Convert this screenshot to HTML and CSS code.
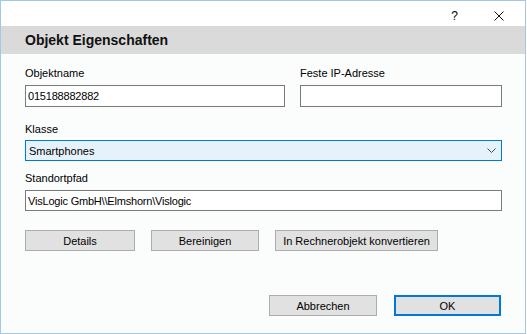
FILE: index.html
```html
<!DOCTYPE html>
<html lang="de">
<head>
    <meta charset="UTF-8">
    <meta name="viewport" content="width=device-width, initial-scale=1.0">
    <title>Objekt Eigenschaften</title>
    <link rel="stylesheet" href="styles.css">
</head>
<body>
    <div class="window">
        <div class="titlebar">
            <span class="help">?</span>
            <span class="close">
                <svg width="10" height="10" viewBox="0 0 10 10">
                    <path d="M0.5 0.5 L9.5 9.5 M9.5 0.5 L0.5 9.5" stroke="#111" stroke-width="1" fill="none"/>
                </svg>
            </span>
        </div>
        <div class="header">Objekt Eigenschaften</div>

        <div class="content">
            <div class="row-two">
                <div class="field">
                    <label for="name">Objektname</label>
                    <input type="text" id="name" class="input" value="015188882882">
                </div>
                <div class="field">
                    <label for="ip">Feste IP-Adresse</label>
                    <input type="text" id="ip" class="input" value="">
                </div>
            </div>

            <div class="field klasse">
                <label>Klasse</label>
                <div class="combo">
                    <span>Smartphones</span>
                    <svg width="9" height="5" viewBox="0 0 9 5">
                        <path d="M0.5 0.5 L4.5 4.5 L8.5 0.5" stroke="#444" stroke-width="1" fill="none"/>
                    </svg>
                </div>
            </div>

            <div class="field standort">
                <label for="path">Standortpfad</label>
                <input type="text" id="path" class="input small" value="VisLogic GmbH\\Elmshorn\Vislogic">
            </div>

            <div class="actions">
                <button class="btn details">Details</button>
                <button class="btn bereinigen">Bereinigen</button>
                <button class="btn convert">In Rechnerobjekt konvertieren</button>
            </div>

            <div class="footer">
                <button class="btn cancel">Abbrechen</button>
                <button class="btn ok">OK</button>
            </div>
        </div>
    </div>
</body>
</html>
```

FILE: styles.css
```css
/* Dialog im Windows-Stil */
html {
    background: #ffffff;
}
body {
    margin: 0;
    font-family: "Liberation Sans", Arial, sans-serif;
    font-size: 11px;
    color: #000000;
}
.window {
    box-sizing: border-box;
    width: 526px;
    height: 334px;
    border: 1px solid #a3c7e8;
    background: #fbfcfc;
}
.titlebar {
    height: 25px;
    background: #ffffff;
    display: flex;
    align-items: center;
    justify-content: flex-end;
    padding-right: 21px;
}
.help {
    font-size: 12px;
    line-height: 12px;
    margin-right: 36px;
    margin-top: 4px;
}
.close {
    display: flex;
    margin-top: 4px;
}
.header {
    height: 28px;
    background: #dadada;
    padding-left: 24px;
    font-size: 14px;
    font-weight: bold;
    line-height: 29px;
    color: #111111;
}
.content {
    width: 477px;
    padding-left: 24px;
    padding-top: 13px;
}
.row-two {
    display: grid;
    grid-template-columns: 260px 202px;
    gap: 15px;
}
.field {
    display: flex;
    flex-direction: column;
}
.field label {
    line-height: 13px;
    height: 13px;
    margin-bottom: 5px;
}
.input {
    box-sizing: border-box;
    height: 22px;
    border: 1px solid #7a7a7a;
    background: #ffffff;
    padding: 0 2px;
    margin: 0;
    font-family: "Liberation Sans", Arial, sans-serif;
    font-size: 11px;
    letter-spacing: -0.2px;
    color: #000000;
    outline: none;
}
.input.small {
    height: 21px;
}
.klasse {
    margin-top: 16px;
}
.klasse label {
    margin-bottom: 4px;
}
.combo {
    box-sizing: border-box;
    height: 21px;
    border: 1px solid #0078d7;
    background: #e5f1fb;
    display: flex;
    align-items: center;
    justify-content: space-between;
    padding: 0 5px 0 3px;
}
.standort {
    margin-top: 11px;
}
.actions {
    display: flex;
    gap: 16px;
    margin-top: 19px;
}
.btn {
    box-sizing: border-box;
    height: 21px;
    border: 1px solid #adadad;
    background: #e1e1e1;
    font-family: "Liberation Sans", Arial, sans-serif;
    font-size: 11px;
    color: #000000;
    padding: 0;
    cursor: pointer;
}
.details {
    width: 110px;
}
.bereinigen {
    width: 108px;
}
.convert {
    width: 163px;
}
.footer {
    display: flex;
    justify-content: flex-end;
    gap: 17px;
    margin-top: 44px;
    padding-right: 1px;
}
.cancel {
    width: 108px;
}
.ok {
    width: 107px;
    border: 2px solid #0078d7;
}
```
